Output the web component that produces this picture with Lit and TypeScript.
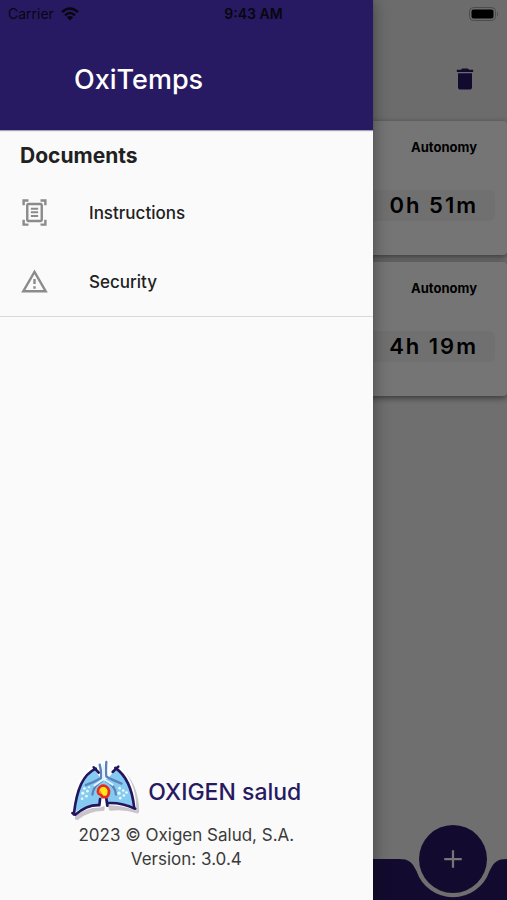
import { LitElement, html, css, svg } from "lit";
import { customElement, property } from "lit/decorators.js";

const icons = {
  trash: svg`<path d="M6 19c0 1.100.9 2 2 2h8c1.100 0 2-.9 2-2V7H6v12zM19 4h-3.500l-1-1h-5l-1 1H5v2h14V4z" />`,
  document: svg`<path d="M7 3H4v3H2V1h5v2zm15 3V1h-5v2h3v3h2zM7 21H4v-3H2v5h5v-2zm13-3v3h-3v2h5v-5h-2zM17 6H7v12h10V6zm2 12c0 1.100-.9 2-2 2H7c-1.100 0-2-.9-2-2V6c0-1.100.9-2 2-2h10c1.100 0 2 .9 2 2v12zM15 8H9v1.700h6V8zm0 3H9v1.700h6V11zm0 3H9v1.700h6V14z" />`,
  warning: svg`<path d="M12 5.990 19.530 19H4.470L12 5.990M12 2 1 21h22L12 2zm1 14h-2v2h2v-2zm0-6h-2v4h2v-4z" />`,
  plus: svg`<path d="M19 12.900h-6.100V19h-1.800v-6.100H5v-1.800h6.100V5h1.800v6.100H19z" />`,
};

@customElement("tank-card")
class TankCard extends LitElement {
  @property() time = "";

  static styles = css`
    :host {
      display: flex;
      flex-direction: column;
      align-items: flex-end;
      box-sizing: border-box;
      height: 134px;
      padding: 16px 12px;
      background: #ffffff;
      border-radius: 4px;
      box-shadow: 0 2px 6px rgba(0, 0, 0, 0.5);
    }
    .label {
      width: 102px;
      margin-bottom: 33px;
      text-align: center;
      font-size: 13px;
      line-height: 20px;
      font-weight: 700;
    }
    .value {
      box-sizing: border-box;
      width: 180px;
      padding-right: 17px;
      border-radius: 6px;
      background: #f3f3f3;
      text-align: right;
      font-size: 22px;
      line-height: 31px;
      font-weight: 600;
      letter-spacing: 2px;
    }
  `;

  render() {
    return html`<div class="label">Autonomy</div>
      <div class="value">${this.time}</div>`;
  }
}

@customElement("lungs-logo")
class LungsLogo extends LitElement {
  static styles = css`
    :host {
      display: block;
    }
    svg {
      display: block;
      width: 70px;
      height: 63px;
    }
  `;

  render() {
    return html`<svg viewBox="42 30 210 190" aria-hidden="true">
      <g transform="translate(9 11)" fill="#c9c5ca" stroke="#c9c5ca" stroke-width="12" stroke-linejoin="round">
        <path d="M110 52C70 75 55 120 50 194Q88 166 128 167L127 150H150L152 166Q195 161 232 174C232 120 212 75 180 50L158 78H132Z" />
      </g>
      <path fill="#fff" stroke="#fff" stroke-width="12" d="M110 52C70 75 55 120 50 194Q88 166 128 167L150 160Q195 161 232 174C232 120 212 75 180 50L148 40H132Z" />
      <path fill="#85caf0" d="M114 60C76 78 59 120 54 187Q90 162 128 164L138 130L152 162Q195 157 228 169C226 120 208 78 178 56L158 80L142 92L126 78Z" />
      <g fill="none" stroke="#5b82bb" stroke-width="7" stroke-linecap="round">
        <path d="M128 44Q134 68 132 84Q112 96 86 106M148 36Q146 64 148 80Q164 90 194 101" />
        <path d="M134 94Q110 106 106 134M148 94Q174 106 177 134" />
      </g>
      <path fill="none" stroke="#dff4ff" stroke-width="6" d="M139 44V88L110 108M141 88L169 106" />
      <g fill="#e9faff">
        <circle cx="82" cy="116" r="4" /><circle cx="91" cy="124" r="4" /><circle cx="77" cy="130" r="5" />
        <circle cx="88" cy="139" r="4" /><circle cx="75" cy="147" r="4" /><circle cx="96" cy="112" r="3" />
        <circle cx="188" cy="115" r="4" /><circle cx="199" cy="122" r="4" /><circle cx="186" cy="130" r="5" />
        <circle cx="201" cy="137" r="4" /><circle cx="190" cy="145" r="4" /><circle cx="209" cy="128" r="4" />
      </g>
      <g fill="none" stroke="#24155f" stroke-linecap="round" stroke-linejoin="round">
        <path stroke-width="8" d="M110 52L125 68M116 56C78 74 59 116 50 194M184 50L167 66M175 54C207 76 226 116 232 174" />
        <path stroke-width="8" d="M46 190L54 195Q90 164 127 166L129 148M148 146L151 168M152 160Q195 158 235 177" />
      </g>
      <path fill="#ffe51b" stroke="#e52b20" stroke-width="8" stroke-linejoin="round" d="M136 107C125 111 119 123 125 132Q135 135 136 142H149Q157 134 156 122Q151 107 136 107Z" />
      <path fill="#f58b22" d="M127 119L134 129L132 132L126 128Z" />
    </svg>`;
  }
}

@customElement("app-root")
class AppRoot extends LitElement {
  static styles = css`
    :host {
      display: block;
      position: relative;
      min-height: 100vh;
      overflow: hidden;
      font-family: Inter, "Liberation Sans", sans-serif;
      color: #000;
    }
    button {
      border: 0;
      padding: 0;
      background: none;
      font: inherit;
      color: inherit;
    }
    svg {
      display: block;
      fill: currentColor;
    }
    .screen {
      display: flex;
      flex-direction: column;
      min-height: 100vh;
      background: #f2f2f2;
    }
    .toolbar {
      display: flex;
      justify-content: flex-end;
      align-items: center;
      box-sizing: border-box;
      height: 121px;
      padding: 37px 28px 0;
      background: #ececec;
      color: #2a1a66;
    }
    .toolbar svg {
      width: 28px;
      height: 28px;
    }
    .cards {
      flex: 1;
      display: flex;
      flex-direction: column;
      gap: 7px;
    }
    .bottom {
      position: relative;
      display: flex;
      height: 41px;
      color: #2a1a66;
    }
    .bar {
      flex: 1;
      background: currentColor;
    }
    .notch {
      width: 120px;
      height: 41px;
    }
    .fab {
      position: absolute;
      right: 20px;
      top: -34px;
      display: grid;
      place-items: center;
      width: 68px;
      height: 68px;
      border-radius: 50%;
      background: #2a1a66;
      color: #fff;
    }
    .fab svg {
      width: 30px;
      height: 30px;
    }
    .scrim {
      position: absolute;
      inset: 0;
      background: rgba(0, 0, 0, 0.54);
    }
    .drawer {
      position: absolute;
      inset: 0 auto 0 0;
      width: 73.5%;
      display: flex;
      flex-direction: column;
      background: #fafafa;
      box-shadow: 0 0 16px rgba(0, 0, 0, 0.4);
      color: #212121;
    }
    .title {
      box-sizing: border-box;
      height: 130px;
      margin: 0;
      padding: 62px 74px 0;
      background: #271a62;
      box-shadow: 0 1px 1px rgba(39, 26, 98, 0.4);
      color: #fff;
      font-size: 27px;
      line-height: 36px;
      font-weight: 500;
    }
    .documents {
      padding-top: 14px;
      border-bottom: 1px solid #d9d9d9;
    }
    h2 {
      margin: 0 0 10px;
      padding: 0 20px;
      font-size: 21px;
      line-height: 24px;
      font-weight: 700;
    }
    .item {
      display: flex;
      align-items: center;
      gap: 40px;
      width: 100%;
      height: 69px;
      padding: 0 20px;
      font-size: 17px;
      line-height: 24px;
      font-weight: 500;
      text-align: left;
    }
    .item svg {
      width: 29px;
      height: 29px;
      color: #8b8b8b;
    }
    footer {
      margin-top: auto;
      padding-bottom: 29px;
      text-align: center;
      font-size: 17px;
      line-height: 24px;
      color: #3b3b3b;
    }
    footer p {
      margin: 0;
    }
    .brand {
      display: flex;
      justify-content: center;
      align-items: center;
      gap: 7px;
      color: #271a62;
      font-size: 23px;
      font-weight: 500;
    }
    .status {
      position: absolute;
      inset: 0 0 auto 0;
      display: grid;
      grid-template-columns: 1fr auto 1fr;
      align-items: center;
      height: 27px;
      padding: 0 8px;
      font-size: 14px;
      line-height: 20px;
      color: #08060f;
    }
    .carrier {
      display: flex;
      align-items: center;
      gap: 7px;
    }
    .clock {
      font-weight: 600;
    }
    .battery {
      justify-self: end;
    }
  `;

  render() {
    return html`
      <main class="screen">
        <div class="toolbar">
          <button aria-label="Delete"><svg viewBox="0 0 24 24">${icons.trash}</svg></button>
        </div>
        <div class="cards">
          <tank-card time="0h 51m"></tank-card>
          <tank-card time="4h 19m"></tank-card>
        </div>
        <div class="bottom">
          <div class="bar"></div>
          <svg class="notch" viewBox="0 0 120 41">
            <path d="M0 0H12C22 0 25 3 29.500 12A38.500 38.500 0 0 0 102.500 12C107 3 110 0 120 0V41H0Z" />
          </svg>
          <button class="fab" aria-label="Add"><svg viewBox="0 0 24 24">${icons.plus}</svg></button>
        </div>
      </main>
      <div class="scrim"></div>
      <aside class="drawer">
        <h1 class="title">OxiTemps</h1>
        <nav class="documents">
          <h2>Documents</h2>
          <button class="item"><svg viewBox="0 0 24 24">${icons.document}</svg>Instructions</button>
          <button class="item"><svg viewBox="0 0 24 24">${icons.warning}</svg>Security</button>
        </nav>
        <footer>
          <div class="brand"><lungs-logo></lungs-logo><span>OXIGEN salud</span></div>
          <p>2023 © Oxigen Salud, S.A.</p>
          <p>Version: 3.0.4</p>
        </footer>
      </aside>
      <div class="status">
        <span class="carrier">Carrier
          <svg width="18" height="14" viewBox="0 0 18 14" aria-hidden="true">
            <g fill="none" stroke="currentColor" stroke-width="2.400">
              <path d="M1 5.200Q9-2.200 17 5.200" /><path d="M4 8.400Q9 3.800 14 8.400" />
            </g>
            <path d="M9 13.500L5.900 10.300Q9 7.700 12.100 10.300Z" />
          </svg>
        </span>
        <span class="clock">9:43 AM</span>
        <svg class="battery" width="30" height="14" viewBox="0 0 30 14" aria-hidden="true">
          <rect x=".5" y=".5" width="26" height="13" rx="4" fill="none" stroke="#4c4c4c" />
          <rect x="2.500" y="2.500" width="22" height="9" rx="2" fill="#000" />
          <path d="M28 4.500Q30 7 28 9.500Z" fill="#4c4c4c" />
        </svg>
      </div>
    `;
  }
}
